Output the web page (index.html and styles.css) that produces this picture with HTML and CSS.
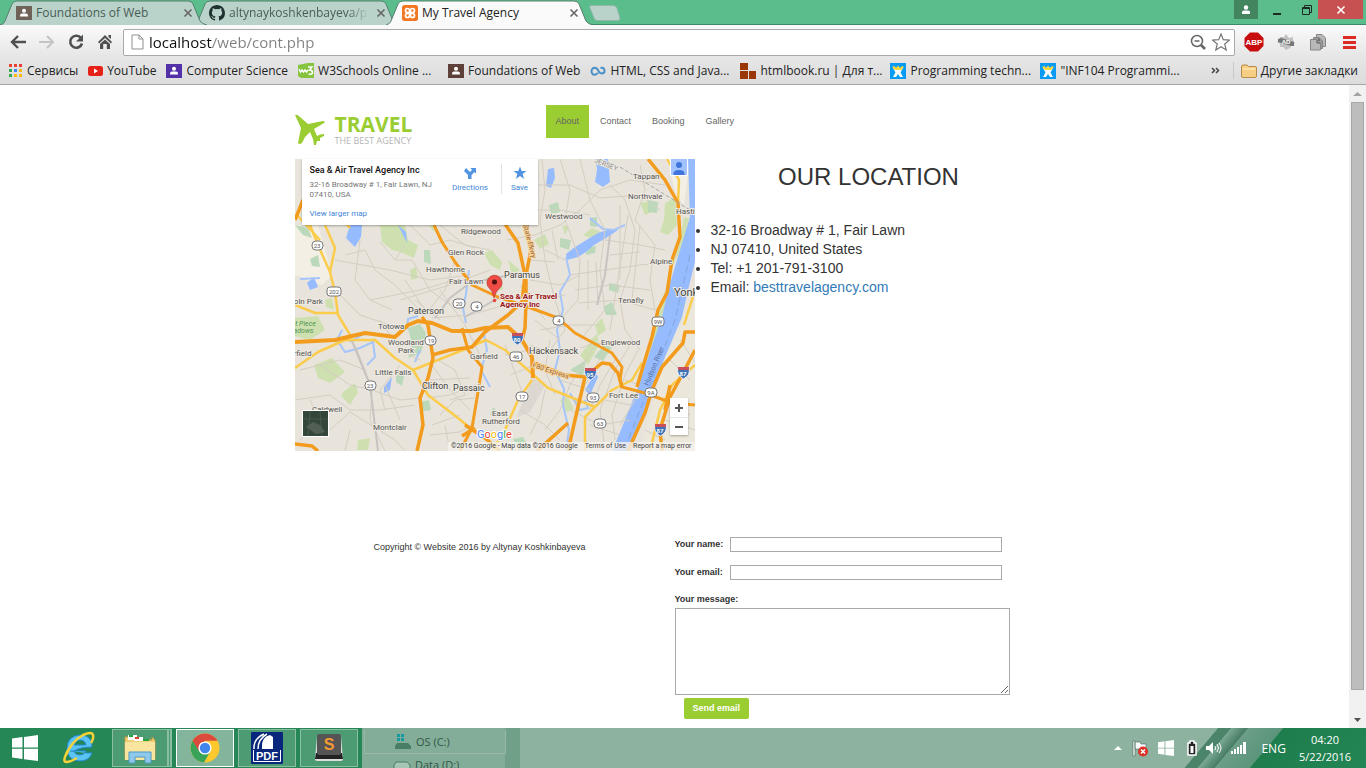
FILE: index.html
```html
<!DOCTYPE html>
<html lang="en">
<head>
<meta charset="utf-8">
<title>My Travel Agency</title>
<link rel="stylesheet" href="styles.css">
</head>
<body>
<svg class="defs" width="0" height="0" aria-hidden="true">
  <symbol id="tab-shape" viewBox="0 0 207 25" preserveAspectRatio="none"><path d="M0 25Q4 24 5 21L12 4Q13 1 17 1H188Q192 1 193 4L200 21Q202 24 207 25"/></symbol>
  <symbol id="person" viewBox="0 0 16 14"><rect width="16" height="14"/><circle cx="8" cy="4.700" r="2" fill="#fff"/><path d="M4 10.500V9.500Q4 7.500 6 7.500H10Q12 7.500 12 9.500V10.500Z" fill="#fff"/></symbol>
  <symbol id="close-x" viewBox="0 0 10 10"><path d="M1.500 1.500L8.500 8.500M8.500 1.500L1.500 8.500" stroke-width="1.600" fill="none"/></symbol>
  <symbol id="wix" viewBox="0 0 16 16"><rect width="16" height="16" fill="#0a9bf5"/><path d="M3 5L7 6H9L13 5L10.500 9.500L13 14H10L8 11L6 14H3L5.500 9.500Z" fill="#fff"/><path d="M2 4L4.500 3L6 5L8 2.500L10 5L12 3L14 4L11 7H5Z" fill="#fdd83a"/></symbol>
  <symbol id="win" viewBox="0 0 26 26"><path d="M0 3.600L10.500 2.100V12.400H0ZM12 1.900L26 0V12.400H12ZM0 13.800H10.500V24L0 22.500ZM12 13.800H26V26L12 24.200Z"/></symbol>
</svg>

<header class="browser">
  <div class="tabstrip">
    <div class="tab tab-first">
      <svg class="tab-bg"><use href="#tab-shape"/></svg>
      <svg class="favicon" fill="#6f6258"><use href="#person"/></svg>
      <span class="tab-title">Foundations of Web</span>
      <button class="tab-close" aria-label="Close tab"><svg width="10" height="10"><use href="#close-x"/></svg></button>
    </div>
    <div class="tab tab-second">
      <svg class="tab-bg"><use href="#tab-shape"/></svg>
      <svg class="favicon" viewBox="0 0 16 16"><path fill="#1f3230" d="M8 0C3.580 0 0 3.580 0 8c0 3.540 2.290 6.530 5.470 7.590.4.070.55-.17.55-.38v-1.490c-2.230.48-2.690-.94-2.690-.94-.36-.92-.89-1.170-.89-1.170-.73-.5.050-.49.050-.49.810.06 1.230.83 1.230.83.710 1.230 1.870.87 2.330.67.070-.52.280-.87.500-1.070-1.780-.2-3.640-.89-3.640-3.950 0-.87.310-1.590.82-2.150-.08-.2-.36-1.020.08-2.120 0 0 .67-.22 2.200.82a7.600 7.600 0 0 1 4 0c1.530-1.040 2.200-.82 2.200-.82.440 1.100.16 1.920.08 2.120.51.560.82 1.270.82 2.150 0 3.070-1.870 3.750-3.650 3.950.29.250.54.730.54 1.480v2.200c0 .21.150.46.550.38A8 8 0 0 0 16 8c0-4.420-3.580-8-8-8z"/></svg>
      <span class="tab-title">altynaykoshkenbayeva/project</span>
      <button class="tab-close" aria-label="Close tab"><svg width="10" height="10"><use href="#close-x"/></svg></button>
    </div>
    <div class="tab tab-active">
      <svg class="tab-bg"><use href="#tab-shape"/></svg>
      <svg class="favicon" viewBox="0 0 16 16"><rect width="16" height="16" rx="2.500" fill="#f37623"/><path d="M5.500 3.500a2 2 0 1 0 0 4H10.500a2 2 0 1 0-2-2V10.500a2 2 0 1 0 2-2H5.500a2 2 0 1 0 2 2V5.500a2 2 0 0 0-2-2" fill="none" stroke="#fff" stroke-width="1.700"/></svg>
      <span class="tab-title">My Travel Agency</span>
      <button class="tab-close" aria-label="Close tab"><svg width="10" height="10"><use href="#close-x"/></svg></button>
    </div>
    <button class="new-tab" aria-label="New tab"><svg width="32" height="16" viewBox="0 0 32 16"><path d="M2 .5H24Q27 .5 28 3L31 13Q31 15.500 29 15.500H8Q6 15.500 5 13L1 3Q0 .5 2 .5Z" fill="#b9d3cb" stroke="#8fb8a8"/></svg></button>
    <div class="window-controls">
      <button class="wc-user" aria-label="User"><svg width="10" height="10" viewBox="0 0 10 10" fill="#fff"><circle cx="5" cy="2.500" r="2.200"/><path d="M1 9V7Q1 5.500 3 5.500H7Q9 5.500 9 7V9Z"/></svg></button>
      <button class="wc-min" aria-label="Minimize"><svg width="10" height="10"><path d="M1 8H9V10H1Z" fill="#1f2a25"/></svg></button>
      <button class="wc-restore" aria-label="Restore"><svg width="11" height="11" fill="none" stroke="#1f2a25"><path d="M.5 3.500H7.500V10.500H.5Z M.5 4.500H8M2.500 3V1.500H9.500V8.500H8"/></svg></button>
      <button class="wc-close" aria-label="Close"><svg width="10" height="10" stroke="#fff"><use href="#close-x"/></svg></button>
    </div>
  </div>

  <div class="toolbar">
    <button class="tool" aria-label="Back"><svg width="16" height="14" viewBox="0 0 16 14" fill="none" stroke="#505050" stroke-width="2.400"><path d="M8 1L2 7L8 13M2 7H16"/></svg></button>
    <button class="tool" aria-label="Forward"><svg width="16" height="14" viewBox="0 0 16 14" fill="none" stroke="#c4c4c4" stroke-width="2"><path d="M8 1L14 7L8 13M14 7H0"/></svg></button>
    <button class="tool" aria-label="Reload"><svg width="16" height="16" viewBox="0 0 16 16"><path d="M12.500 3.500A6 6 0 1 0 14 9.500" fill="none" stroke="#505050" stroke-width="2.600"/><path d="M15 .5V7.500H8Z" fill="#505050"/></svg></button>
    <button class="tool" aria-label="Home"><svg width="16" height="16" viewBox="0 0 16 16" fill="#505050"><path d="M8 1L15 8L14 9.500L8 4L2 9.500L1 8ZM11.500 1H14V5L11.500 3ZM3 10L8 5.500L13 10V15H9.800V10H6.200V15H3Z"/></svg></button>
    <div class="omnibox">
      <svg width="13" height="16" viewBox="0 0 13 16" fill="#fff" stroke="#8f8f8f"><path d="M1 1H8L12 5V15H1Z M8 1V5H12"/></svg>
      <input class="url" type="text" aria-label="Address" value="localhost/web/cont.php">
      <svg width="17" height="17" viewBox="0 0 17 17" fill="none" stroke="#666" stroke-width="1.500"><circle cx="7" cy="7" r="5.500"/><path d="M4.500 7H9.500"/><path d="M11 11L15 15" stroke-width="2.500"/></svg>
      <svg width="18" height="18" viewBox="0 0 18 18" fill="#fff" stroke="#777" stroke-width="1.200"><path d="M9 1L11.300 6.700L17.400 7.100L12.700 11L14.200 17L9 13.700L3.800 17L5.300 11L.6 7.100L6.700 6.700Z"/></svg>
    </div>
    <button class="tool ext" aria-label="ABP"><svg width="20" height="20" viewBox="0 0 20 20"><path d="M6 .5H14L19.500 6V14L14 19.500H6L.5 14V6Z" fill="#c70d0d"/><text x="10" y="13" class="abp">ABP</text></svg></button>
    <button class="tool ext" aria-label="Extension"><svg width="18" height="18" viewBox="0 0 18 18"><path d="M9 1L12 5L16 4V7L18 10L15 12L13 15L9 17L6 14L3 14V11L0 9L3 6L3 4L7 4Z" fill="#c2c2c2"/><path d="M1 6L4 5L17 9L17 13L14 13L1 9Z" fill="#777"/><text x="9" y="11" class="ad">AD</text></svg></button>
    <button class="tool ext" aria-label="Documents"><svg width="18" height="18" viewBox="0 0 18 18" stroke="#858585"><path d="M7.500 1.500H13L16.500 5V13.500H7.500Z" fill="#b8b8b8"/><path d="M4.500 4.500H10L13.500 8V15.500H4.500Z" fill="#999"/><path d="M1.500 6.500H8L11.500 10V17H1.500Z" fill="#b8b8b8"/><path d="M8 7V10H11M10 5V8" fill="none" stroke="#555"/></svg></button>
    <button class="tool ext" aria-label="Menu"><svg width="14" height="14" viewBox="0 0 14 14" fill="#dc2b25"><path d="M0 1H13V4H0ZM0 6H13V9H0ZM0 11H13V14H0Z"/></svg></button>
  </div>

  <nav class="bookmarks" aria-label="Bookmarks">
    <a class="bm" href="#"><svg width="15" height="15" viewBox="0 0 15 15"><path d="M1 1H4V4H1ZM6 1H9V4H6ZM11 1H14V4H11Z" fill="#e84134"/><path d="M1 6H4V9H1ZM1 11H4V14H1Z" fill="#34a853"/><path d="M6 6H9V9H6Z" fill="#4285f4"/><path d="M11 6H14V9H11ZM6 11H9V14H6ZM11 11H14V14H11Z" fill="#f9bb0b"/></svg>Сервисы</a>
    <a class="bm" href="#"><svg width="15" height="12" viewBox="0 0 15 12"><rect y="1" width="15" height="10" rx="2.500" fill="#e62117"/><path d="M6 3.500L10 6L6 8.500Z" fill="#fff"/></svg>YouTube</a>
    <a class="bm" href="#"><svg width="16" height="14" fill="#5130a8"><use href="#person"/></svg>Computer Science</a>
    <a class="bm bm-long" href="#"><svg width="16" height="15" viewBox="0 0 16 15"><path d="M0 2L10 0H16V15H3L0 13Z" fill="#86c440"/><path d="M1 6L2.500 9L4 7L5.500 9L7 7L8.500 9L10 7M10 4H14L11.500 7Q14.500 7 14.500 9.500Q14 12 10.500 11" fill="none" stroke="#fff" stroke-width="1.500"/></svg>W3Schools Online ...</a>
    <a class="bm" href="#"><svg width="16" height="14" fill="#5d4037"><use href="#person"/></svg>Foundations of Web</a>
    <a class="bm bm-long" href="#"><svg width="16" height="12" viewBox="0 0 16 12" fill="none" stroke="#4a90c8" stroke-width="2"><path d="M8 8Q3 12 1.500 7Q1.500 2 6 3Q8 4 9 7Q12 10 14.500 7Q15 2 10.500 3"/></svg>HTML, CSS and Java...</a>
    <a class="bm bm-long" href="#"><svg width="16" height="16" fill="#9b3706"><path d="M0 0H8V7H0ZM0 8H8V16H0ZM9 8H16V16H9Z"/></svg>htmlbook.ru | Для т...</a>
    <a class="bm bm-long" href="#"><svg width="16" height="16"><use href="#wix"/></svg>Programming techn...</a>
    <a class="bm bm-long" href="#"><svg width="16" height="16"><use href="#wix"/></svg>"INF104 Programmi...</a>
    <button class="more" aria-label="More bookmarks"><svg width="9" height="7" fill="none" stroke="#444" stroke-width="1.500"><path d="M1 1L3.500 3.500L1 6M5 1L7.500 3.500L5 6"/></svg></button>
    <a class="bm bm-folder" href="#"><svg width="16" height="14" viewBox="0 0 16 14"><path d="M.5 3Q.5 1 2 1H6L7.500 2.500H14Q15.500 2.500 15.500 4V12Q15.500 13.500 14 13.500H2Q.5 13.500 .5 12Z" fill="#f6cf85" stroke="#b98a48"/><path d="M1.500 5H14.500" stroke="#fff0c8"/></svg>Другие закладки</a>
  </nav>
</header>

<div class="viewport">
  <main class="site">
    <div class="site-head">
      <a class="logo" href="#">
        <svg width="31" height="32" viewBox="0 0 31 32" fill="#9acd32"><path d="M0 1Q2 0 5 3L13 10L28 7Q31 7 29 9L19 15L22 22Q25 20 29 20L29 22L25 24L25 27L22 27L21 31L19 31L18 25L15 18L10 23L7 29Q4 31 3 29L6 14Z"/></svg>
        <span class="logo-text"><b>TRAVEL</b><small>THE BEST AGENCY</small></span>
      </a>
      <nav class="menu" aria-label="Site">
        <a class="current" href="#">About</a><a href="#">Contact</a><a href="#">Booking</a><a href="#">Gallery</a>
      </nav>
    </div>

    <div class="content">
      <div class="map">
        <svg class="map-art" viewBox="295 159 400 292" role="img" aria-label="Map of Fair Lawn">
          <rect x="295" y="159" width="400" height="292" fill="#e8e4db"/>
          <path fill="#f3efe5" d="M295 225H318L332 275L322 285L295 275ZM667 159H690L684 205L676 195Z"/>
          <path fill="#dcd8d1" d="M533 378L545 385L530 412L516 418Z"/>
          <path fill="#ece7db" d="M665 357L695 300V451H640Z"/>
          <g fill="#cfe0b0">
            <path d="M380 225H405L408 240L418 245L414 258L400 252L392 250L382 242ZM295 318L318 316L325 330L310 340L295 336ZM314 365L332 358L345 372L330 383L318 378ZM343 392L355 383L358 392L350 405L341 396ZM410 270L416 267L418 278L411 280ZM428 224L435 223L434 232ZM484 253L492 250L502 262L500 270L490 265ZM508 260L520 270L512 275ZM534 240L545 234L549 244L540 249ZM583 235L592 228L601 232L590 238ZM562 225L569 227L565 235ZM665 203L675 198L677 225L668 235L660 232L664 220ZM640 203L650 201L652 212L645 215ZM485 278L500 276L503 290L490 290ZM580 355L592 340L600 343L588 365ZM595 325L602 318L606 330L598 336ZM560 400L568 397L574 409L566 412ZM358 440L370 438L368 450L357 450ZM590 340L597 334L599 342ZM325 300L332 298L334 310L326 307Z"/>
            <path d="M668 275L683 245L689 218L684 217L679 245L668 280ZM665 290L656 325L645 370L650 357L667 310Z"/>
          </g>
          <g fill="#bbd9ba">
            <path d="M295 225L308 228L312 238L303 235ZM310 259L318 255L320 267L312 266ZM408 328L420 324L426 333L421 353L408 358L412 344ZM396 374L404 376L402 386L396 382ZM420 402L429 400L431 410L420 412ZM424 250L430 250L431 264L424 262ZM549 205L558 202L560 212L551 214ZM560 238L571 240L569 250L560 247ZM587 248L596 246L595 253L586 255ZM590 218L597 217L597 227L590 226ZM609 283L620 285L618 293L609 290ZM594 357L604 345L612 347L603 361ZM648 200L658 202L657 213L648 212ZM596 160L602 159L603 167L597 167ZM603 307L612 302L617 315L606 315ZM513 439L523 437L530 449L519 451ZM570 370L586 360L583 376ZM490 415L493 407L500 414Z"/>
          </g>
          <g fill="#96bbff">
            <path d="M688 159H695V262L688 290L682 317L665 357L648 400L635 437L632 451H612L618 437L637 390L648 357L662 317L668 290L677 260L690 217Z"/>
            <path d="M350 225L362 225L361 237L355 247L346 238ZM398 225L406 232L407 243L402 233ZM596 159L608 159L610 182L603 187L595 182L597 170ZM548 169L554 168L555 178L551 188L546 186ZM566 254L575 247L588 239L598 233L610 229L618 230L606 238L594 245L586 252L578 257L567 260ZM384 387L392 377L390 390L384 393ZM307 283L314 277L318 287L310 290ZM585 390L591 380L594 370L598 377L590 395Z"/>
          </g>
          <g fill="none" stroke="#a6c5fa" stroke-width="2">
            <path d="M566 257L570 275L560 292L563 310L557 330L560 350L555 370L564 389L563 405L569 430L566 451"/>
            <path d="M590 218L603 229L614 230L625 225M469 270L466 294L463 308L466 323"/>
            <path d="M342 330L337 340L345 352L360 348L373 342L375 357L367 365M365 333L350 342M418 316L408 319L407 329M484 335L487 350L481 370L490 387M420 350L415 362M300 279L320 278M585 400L588 408L580 410L570 393"/>
          </g>
          <g fill="none" stroke="#d4cdc2">
            <path d="M345 255L365 250L375 270L395 285L410 300L425 315M380 242L395 260L412 260L430 290L450 305M360 240L355 280L370 300L392 310M340 295L360 315L390 325M335 260L390 270L430 280L470 275M370 300L395 295L420 290L455 280M440 225L465 245L490 250M410 225L430 245L450 240L475 248M395 260L405 245M400 300L450 285L490 270M425 315L445 290L455 260M432 318L470 315L505 305M440 290L465 325L480 355M415 300L440 320M405 280L425 310M380 320L400 350L420 360M355 345L365 370L372 390L370 420L385 451M372 390L400 400L420 398M320 365L350 385L372 390M300 370L340 360L365 370M295 400L330 395L350 410L380 410L415 405M330 430L350 412L395 440L405 451M300 440L320 420L310 400M345 451L350 430M385 410L380 390L400 365M400 420L385 385M432 365L450 390L470 410M438 360L455 370L465 395L450 400M430 380L470 378M428 398L450 395L475 385M440 415L455 400L475 398M432 425L460 415M430 435L460 432L475 423M445 425L450 451"/>
            <path d="M507 240L535 235L560 225L580 210L600 190L630 180L665 185M542 159L545 190L540 220L545 260L555 300L565 330L550 350M560 159L570 190L565 220L580 260L578 300L560 320M580 159L590 200L605 230L600 270L605 310L580 340M610 185L625 200L635 230L630 270L620 300L625 330L640 350M640 165L645 190L635 220L655 245L650 280L655 310M538 185L570 185L600 198L640 195L660 210M530 210L560 210L590 215M545 250L565 260M570 275L605 270L640 265L670 262M575 290L610 285L650 290M578 303L620 300L655 310M605 240L640 245L665 250M610 255L640 252M530 260L555 262M530 280L560 285L580 275M540 300L565 295M535 320L560 340M530 345L560 355L590 345L620 340M540 330L570 325L600 325M505 355L530 350M510 375L535 365M550 340L545 370L555 395M595 345L570 385L560 410L545 430M605 350L585 385L575 405M615 360L600 385L590 410M630 345L615 370L600 410L605 451M638 350L625 375L612 415L615 440M570 410L600 425L630 420M590 425L620 435M520 410L545 425L560 440M545 390L540 415L530 435M655 395L690 415M670 360L690 380M665 420L695 430M645 430L665 440M680 340L695 362M560 380L590 390M635 400L620 425"/>
            <path d="M620 205V280M628 215L610 330M588 260V310M596 262L598 305M640 225L632 300M552 230L558 260M520 285L545 320M505 345L525 400M625 380L640 385M605 400L630 405"/>
          </g>
          <path fill="none" stroke="#c7c3c0" stroke-width="2" d="M435 318L450 298L470 283L505 276M465 317L500 297M610 235L605 275L597 305M352 341L370 385L378 451"/>
          <g fill="none" stroke="#fbcb4b" stroke-width="2.500" stroke-linejoin="round">
            <path d="M310 225L318 245L330 272L335 292L338 315L352 338M325 225L335 248L330 272M295 305L315 313L338 313M295 368L318 352L345 340L375 340L395 358L413 370L438 360L468 348L486 340L505 350L528 370L548 388L595 407L612 390L632 380L642 363"/>
            <path d="M413 370L428 395L458 418L475 432M532 380L518 400L505 430L492 451M595 407L585 417L585 451M667 159L679 180L678 203M695 365L672 385L660 410L650 451M297 215L320 240M338 215L350 228M695 290L684 325"/>
          </g>
          <g fill="none" stroke="#f39b1c" stroke-linejoin="round">
            <path stroke-width="4" d="M295 342L335 340L365 333L395 337L408 325L418 321L432 323L452 331L472 331L485 328L508 327L522 340L532 357L533 378"/>
            <path stroke-width="3.500" d="M417 451L423 425L420 398L428 378L433 358L428 325L422 317M432 355L450 350L472 347L485 332L508 315L522 302L525 275L518 243L505 224"/>
            <path stroke-width="3" d="M462 328L468 350L482 367L478 392L472 428L460 451M434 225L442 242L455 262L472 285L498 297L528 307L558 318L575 333L612 353L622 367L620 380L622 387L645 393L672 403L695 405"/>
            <path stroke-width="3.500" d="M525 222L531 250L526 275L526 303L525 328L522 340M537 451L568 423M568 451L575 420L585 377L565 375L535 363M585 377L602 363L610 364L618 373L622 387"/>
            <path stroke-width="3.500" d="M648 159L665 180L678 203L680 237L672 260L667 293L658 310L652 337L642 370L637 387M695 332L685 332L683 343L662 367L652 390L645 413L628 451M695 350L683 373L670 397L660 430L662 451M295 220L303 200M295 444L312 446L318 451M465 425L485 438L500 451M670 385L665 410M475 428L462 436"/>
          </g>
          <path d="M690 255L675 320L650 385L628 440" fill="none" stroke="#83a4dc" stroke-dasharray="7 4"/>
          <path d="M620 167L690 210" fill="none" stroke="#aaa" stroke-dasharray="4 2"/>
          <g class="town">
            <text x="633" y="179">Tappan</text><text x="628" y="199">Northvale</text><text x="676" y="214">Hastings</text><text x="545" y="219">Westwood</text><text x="461" y="234">Ridgewood</text><text x="448" y="255">Glen Rock</text><text x="426" y="272">Hawthorne</text><text x="449" y="284">Fair Lawn</text><text x="650" y="264">Alpine</text><text x="618" y="303">Tenafly</text><text x="601" y="345">Englewood</text><text x="378" y="329">Totowa</text><text x="388" y="345">Woodland</text><text x="398" y="353">Park</text><text x="470" y="359">Garfield</text><text x="375" y="375">Little Falls</text><text x="312" y="412">Caldwell</text><text x="373" y="430">Montclair</text><text x="492" y="416">East</text><text x="482" y="424">Rutherford</text><text x="279" y="304">Lincoln Park</text><text x="283" y="356">Fairfield</text><text x="609" y="398">Fort Lee</text>
          </g>
          <g class="city"><text x="504" y="278">Paramus</text><text x="408" y="314">Paterson</text><text x="529" y="354">Hackensack</text><text x="422" y="389">Clifton</text><text x="453" y="391">Passaic</text><text x="674" y="296" class="large">Yonkers</text></g>
          <g class="park"><text x="281" y="326">Great Piece</text><text x="284" y="333">Meadows</text></g>
          <g class="road"><text transform="translate(523 225) rotate(75)">State Pkwy</text><text transform="translate(532 367) rotate(18)">I-80 Express</text></g>
          <text class="river" transform="translate(648 386) rotate(-67)">Hudson River</text>
          <text class="jersey" transform="translate(594 162) rotate(22)">JERSEY</text>
          <g class="shield">
            <rect x="312" y="241" width="11" height="9" rx="4"/><text x="317" y="248">23</text><rect x="327" y="287" width="14" height="9" rx="3"/><text x="334" y="294">202</text><rect x="453" y="299" width="12" height="9" rx="4"/><text x="459" y="306">20</text><rect x="471" y="302" width="11" height="9" rx="4"/><text x="477" y="309">4</text><rect x="425" y="336" width="11" height="9" rx="4"/><text x="431" y="343">19</text><rect x="365" y="381" width="11" height="9" rx="4"/><text x="370" y="388">23</text><rect x="553" y="316" width="11" height="9" rx="4"/><text x="559" y="323">4</text><rect x="510" y="352" width="12" height="9" rx="3"/><text x="516" y="359">46</text><rect x="516" y="392" width="12" height="9" rx="4"/><text x="522" y="399">17</text><rect x="587" y="393" width="12" height="9" rx="4"/><text x="593" y="400">93</text><rect x="594" y="419" width="12" height="9" rx="4"/><text x="600" y="426">63</text><rect x="652" y="317" width="12" height="9" rx="3"/><text x="658" y="324">9W</text><rect x="645" y="388" width="12" height="9" rx="4"/><text x="651" y="395">9A</text>
          </g>
          <g class="interstate">
            <path d="M512 334H523Q525 341 517.500 345Q510 341 512 334ZM585 369H596Q598 376 590.500 380Q583 376 585 369ZM678 368H689Q691 375 683.500 379Q676 375 678 368ZM655 425H666Q668 432 660.500 436Q653 432 655 425Z"/>
            <path class="crown" d="M512 333H523V336H512ZM585 368H596V371H585ZM678 367H689V370H678ZM655 424H666V427H655Z"/>
            <text x="517" y="342">80</text><text x="590" y="377">95</text><text x="683" y="376">87</text><text x="660" y="433">87</text>
          </g>
          <path d="M494 298Q493 291 488 286.500A7.500 7.500 0 1 1 501 286.500Q495 292 494 298Z" fill="#ee4c45" stroke="#b93631" stroke-width=".7"/>
          <circle cx="494.500" cy="282" r="2.500" fill="#4d1210"/><circle cx="494.500" cy="300.500" r="1.800" fill="#e8453c"/>
          <g class="place"><text x="500" y="299">Sea &amp; Air Travel</text><text x="500" y="307">Agency Inc</text></g>
          <text class="google" x="477" y="438"><tspan fill="#4285f4">G</tspan><tspan fill="#ea4335">o</tspan><tspan fill="#fbbc05">o</tspan><tspan fill="#4285f4">g</tspan><tspan fill="#34a853">l</tspan><tspan fill="#ea4335">e</tspan></text>
          <rect x="302.500" y="410.500" width="26" height="26" fill="#34463a" stroke="#fff"/>
          <path d="M303 419H328M310 411L308 436M320 411L322 436" stroke="#46594d" fill="none"/><path d="M306 427L313 422L320 425L325 432L316 434Z" fill="#525f55"/>
          <rect x="670.500" y="158.500" width="17" height="17" fill="#a0c3ff" stroke="#fff"/><circle cx="679" cy="165" r="3" fill="#3f74dc"/><path d="M673.500 175V173Q674 170 679 170Q684 170 684.500 173V175Z" fill="#3f74dc"/>
        </svg>
        <div class="card">
          <div class="card-place"><strong>Sea &amp; Air Travel Agency Inc</strong><p>32-16 Broadway # 1, Fair Lawn, NJ 07410, USA</p><a href="#">View larger map</a></div>
          <a class="card-action" href="#"><svg width="14" height="14" viewBox="0 0 14 14" fill="#5294e2"><path d="M5 13V9L1 5L3 2L7 6L9 4L7.500 2H13V7.500L11.500 6L8.500 9V13Z"/></svg>Directions</a>
          <a class="card-action save" href="#"><svg width="14" height="14" viewBox="0 0 14 14" fill="#5294e2"><path d="M7 .5L8.700 5H13.500L9.700 8L11 13L7 10L3 13L4.300 8L.5 5H5.300Z"/></svg>Save</a>
        </div>
        <div class="zoom"><button aria-label="Zoom in"><svg width="8" height="8"><path d="M3 0H5V3H8V5H5V8H3V5H0V3H3Z" fill="#555"/></svg></button><button aria-label="Zoom out"><svg width="8" height="8"><path d="M0 3H8V5H0Z" fill="#555"/></svg></button></div>
        <div class="credits"><span>©2016 Google - Map data ©2016 Google</span><a href="#">Terms of Use</a><a href="#">Report a map error</a></div>
      </div>

      <section class="location">
        <h1>OUR LOCATION</h1>
        <ul>
          <li>32-16 Broadway # 1, Fair Lawn</li>
          <li>NJ 07410, United States</li>
          <li>Tel: +1 201-791-3100</li>
          <li>Email: <a href="#">besttravelagency.com</a></li>
        </ul>
      </section>
    </div>

    <footer class="site-foot">
      <p class="copyright">Copyright © Website 2016 by Altynay Koshkinbayeva</p>
      <form class="mail">
        <div class="row"><label for="name">Your name:</label><input id="name" type="text"></div>
        <div class="row"><label for="email">Your email:</label><input id="email" type="email"></div>
        <label class="message-label" for="message">Your message:</label>
        <textarea id="message"></textarea>
        <button class="send" type="button">Send email</button>
      </form>
    </footer>
  </main>
  <div class="scrollbar" aria-hidden="true">
    <svg width="17" height="17"><path d="M4 11L8.500 7L13 11Z" fill="#a3a3a3"/></svg>
    <div class="thumb"></div>
    <svg width="17" height="17"><path d="M5 7H12L8.500 11Z" fill="#505050"/></svg>
  </div>
</div>

<div class="taskbar">
  <button class="start" aria-label="Start"><svg width="26" height="26" fill="#fff"><use href="#win"/></svg></button>
  <button class="task" aria-label="Internet Explorer"><svg width="34" height="34" viewBox="0 0 34 34"><path d="M8 20H24Q22 24 18 24Q13 24 12 20Q18 16 30 16Q30 4 18 4Q5 5 5 18Q6 30 18 30Q27 30 30 22H24M12 14Q14 9 18 9Q23 9 24 14Z" fill="#5bc4f4" fill-rule="evenodd" stroke="#238bd0"/><path d="M6 19Q0 31 4 31Q8 31 15 27M4 24Q9 11 21 4Q30 0 31 4Q32 7 29 12" fill="none" stroke="#f7d238" stroke-width="2.500"/></svg></button>
  <button class="task open stack" aria-label="Explorer"><svg width="34" height="32" viewBox="0 0 34 32"><path d="M2 5H13L15 8H29V5L32 8V27H2Z" fill="#edcf77" stroke="#c49a43"/><path d="M5 3H14V8H5ZM11 5H20V9H11Z" fill="#fff"/><path d="M6 3H10V5H6ZM20 7H26V9H20Z" fill="#22a445"/><path d="M12 5H16V7H12Z" fill="#e13e29"/><path d="M2 10H32V28H2Z" fill="#f8e5a0"/><path d="M6 31V20H28V31H22V25H12V31Z" fill="#8fc8e9" stroke="#4b9ac6"/></svg></button>
  <button class="task open active" aria-label="Chrome"><svg width="30" height="30" viewBox="0 0 30 30"><circle cx="15" cy="15" r="14.500" fill="#fbc82e"/><path d="M2.500 7.700A14.500 14.500 0 0 1 27.600 7.700H15L9 19Z" fill="#da4a3d"/><path d="M2.500 7.700A14.500 14.500 0 0 0 14 29.500L20.500 18L9 18Z" fill="#39a35a"/><circle cx="15" cy="15" r="6.600" fill="#fff"/><circle cx="15" cy="15" r="5.200" fill="#4285ed"/></svg></button>
  <button class="task open" aria-label="PDF"><svg width="32" height="32" viewBox="0 0 32 32"><rect width="32" height="32" rx="1" fill="#08277c"/><path d="M3 17V14Q4 6 13 2M7 17Q7 7 16 2" fill="none" stroke="#fff" stroke-width="1.500"/><path d="M11 16Q10 5 19 3L22 5V17H11Z" fill="#fff"/><path d="M2.500 18V29.500H29.500V18" fill="none" stroke="#fff"/><text x="16" y="28" class="pdf">PDF</text></svg></button>
  <button class="task open" aria-label="Sublime Text"><svg width="30" height="30" viewBox="0 0 30 30"><path d="M3 3L1 26Q1 28 3 28H27Q29 28 29 26L27 3Z" fill="#ddd"/><path d="M2 20L1 26H29L28 20Z" fill="#222"/><rect x="3" y="1" width="24" height="21" rx="2" fill="#555"/><text x="15" y="17" class="sublime">S</text></svg></button>
  <div class="glass">
    <div class="drives">
      <div class="drive drive-top"><svg width="18" height="16" viewBox="0 0 18 16"><path d="M3 0H6V3H3ZM7 0H10V3H7ZM3 4H6V7H3ZM7 4H10V7H7Z" fill="#139a9e"/><path d="M3 9H14L17 12V15H1V12Z" fill="#497d65"/></svg>OS (C:)</div>
      <div class="drive"><svg width="18" height="16" viewBox="0 0 18 16"><path d="M3 5H14L17 8V15H1V8Z" fill="#a6c6b5" stroke="#497d65"/></svg>Data (D:)</div>
    </div>
  </div>
  <div class="tray">
    <svg width="10" height="6" viewBox="0 0 10 6"><path d="M1 5L5 1L9 5Z" fill="#fff"/></svg>
    <svg width="17" height="17" viewBox="0 0 17 17"><path d="M1 1H3V16H1ZM3 2H8L9 4H14V11H8L7 9H3Z" fill="#fff" stroke="#465" stroke-width=".6"/><circle cx="11" cy="11.500" r="5" fill="#dc3229"/><path d="M9 9.500L13 13.500M13 9.500L9 13.500" stroke="#fff" stroke-width="1.500"/></svg>
    <svg width="16" height="16" viewBox="0 0 26 26" fill="#fff"><use href="#win"/></svg>
    <svg class="battery" width="10" height="16" viewBox="0 0 10 16"><path d="M3 1H7V3H9V15H1V3H3Z" fill="#222" stroke="#fff" stroke-width="1.500"/><path d="M3.500 6H6.500V13H3.500Z" fill="#fff"/></svg>
    <svg width="16" height="14" viewBox="0 0 16 14"><path d="M0 5H3L7 1V13L3 9H0Z" fill="#fff"/><path d="M9 5Q10 7 9 9M11 3Q14 7 11 11M13 2Q17 7 13 12" fill="none" stroke="#fff"/></svg>
    <svg width="16" height="12" fill="#fff"><path d="M0 9H2V12H0ZM3 7H5V12H3ZM6 5H8V12H6ZM9 3H11V12H9ZM12 0H15V12H12Z"/></svg>
    <span class="lang">ENG</span>
    <span class="clock">04:20<br>5/22/2016</span>
  </div>
</div>
</body>
</html>
```
FILE: styles.css
```css
* { box-sizing: border-box; }
body {
  margin: 0;
  height: 100vh;
  display: flex;
  flex-direction: column;
  overflow: hidden;
  background: #fff;
  color: #333;
  font-family: "Liberation Sans", Arial, sans-serif;
}
button { border: 0; padding: 0; background: none; font: inherit; color: inherit; }
a { text-decoration: none; color: inherit; }
svg { flex: none; display: block; }
.defs { position: absolute; }

/* Browser frame */
.browser { flex: none; font-family: "Open Sans", "Noto Sans", sans-serif; font-size: 12px; color: #222; }
.tabstrip { height: 25px; display: flex; background: #5cbd8c; border-bottom: 1px solid #3f8766; }
.tab { position: relative; flex: 0 1 207px; min-width: 0; height: 25px; padding: 0 11px 0 16px; display: flex; align-items: center; gap: 4px; color: #4a5c56; }
.tab + .tab { margin-left: -14px; }
.tab-first { z-index: 2; }
.tab-second { z-index: 1; }
.tab-active { z-index: 3; color: #222; }
.tab-bg { position: absolute; left: 0; top: 0; width: 100%; height: 100%; fill: #b9d3cb; stroke: #55806f; }
.tab-active .tab-bg { fill: #fafafa; }
.favicon { position: relative; width: 16px; height: 16px; }
.tab-title { position: relative; flex: 1; min-width: 0; overflow: hidden; white-space: nowrap; }
.tab-second .tab-title { -webkit-mask-image: linear-gradient(to right, #000 85%, transparent); mask-image: linear-gradient(to right, #000 85%, transparent); }
.tab-close { position: relative; width: 16px; height: 16px; display: grid; place-items: center; stroke: #666; }
.new-tab { margin: 5px 0 0 -4px; align-self: flex-start; }
.window-controls { margin-left: auto; display: flex; padding-right: 3px; height: 19px; }
.window-controls button { display: grid; place-items: center; }
.wc-user { width: 24px; background: #43855f; }
.wc-min { width: 38px; }
.wc-restore { width: 22px; }
.window-controls .wc-close { width: 45px; background: #c75050; }

.toolbar { height: 32px; display: flex; align-items: center; padding: 2px 0 0 3px; background: linear-gradient(#fafafa, #e6e6e6); }
.tool { width: 29px; height: 26px; display: grid; place-items: center; }
.ext { width: 32px; }
.omnibox { flex: 1; margin: 0 3px 0 4px; height: 27px; padding: 0 4px 0 7px; display: flex; align-items: center; gap: 5px; background: #fff; border: 1px solid #a9a9a9; border-radius: 2px; }
.url { flex: 1; min-width: 0; border: 0; padding: 0; outline: 0; font: 15px "Open Sans", "Noto Sans", sans-serif; color: transparent; background: linear-gradient(to right, #111 63px, #808080 63px); -webkit-background-clip: text; background-clip: text; }
.abp, .ad, .pdf, .sublime { font-family: "Liberation Sans", Arial, sans-serif; font-weight: bold; text-anchor: middle; fill: #fff; }
.abp { font-size: 8px; }
.ad { font-size: 6px; }

.bookmarks { height: 28px; display: flex; align-items: center; gap: 10px; padding: 0 8px; background: linear-gradient(#e6e6e6, #dcdcdc); border-bottom: 1px solid #a6a6a6; white-space: nowrap; }
.bm { display: flex; align-items: center; gap: 4px; }
.bm-long { width: 140px; }
.more { margin-left: auto; width: 12px; }
.bm-folder { border-left: 1px solid #c8c8c8; padding-left: 7px; }

/* Page viewport */
.viewport { flex: 1; min-height: 0; display: flex; overflow: hidden; }
.site { flex: 1; padding: 0 calc((100% - 777px) / 2); }
.scrollbar { width: 17px; background: #f1f1f1; display: flex; flex-direction: column; }
.thumb { flex: 1; margin: 0 2px 21px; background: #bdbdbd; border: 1px solid #a8a8a8; }

.site-head { display: flex; height: 74px; padding-top: 20px; }
.logo { flex: 0 0 251px; display: flex; gap: 9px; padding-top: 9px; }
.logo-text { display: flex; flex-direction: column; font-family: "Open Sans", sans-serif; color: #9acd32; }
.logo-text b { font-size: 21px; line-height: 21px; }
.logo-text small { font-size: 9px; line-height: 12px; color: #b5b5b5; }
.menu { display: flex; gap: 1px; height: 33px; font-size: 9px; line-height: 13px; color: #666; }
.menu a { padding: 10px; }
.menu .current { background: #9acd32; }

.content { display: flex; }
.map { position: relative; flex: 0 0 400px; font-family: Roboto, sans-serif; }
.map-art { width: 100%; height: auto; }
.map-art text { font-family: Roboto, sans-serif; }
.town text, .city text { fill: #555; stroke: #eeeae2; stroke-width: 2px; paint-order: stroke; }
.town text { font-size: 8px; }
.city text { font-size: 9px; fill: #444; }
.city .large { font-size: 11px; }
.park text { font-size: 7px; font-style: italic; fill: #4e9450; }
.road text { font-size: 7px; fill: #9a5b1c; stroke: #f7d9a8; stroke-width: 2px; paint-order: stroke; }
.map-art .river { font-size: 7px; fill: #55709c; }
.map-art .jersey { font-size: 7px; fill: #8b8b8b; stroke: #eeeae2; stroke-width: 2px; paint-order: stroke; }
.shield rect { fill: #fff; stroke: #777; }
.shield text, .interstate text { font-size: 6px; text-anchor: middle; fill: #555; }
.interstate path { fill: #3e74b5; stroke: #eef; stroke-width: 1px; }
.interstate .crown { fill: #c8505a; stroke: none; }
.interstate text { fill: #fff; font-weight: bold; }
.place text { font-size: 8px; font-weight: bold; fill: #9b1520; stroke: #eeeae2; stroke-width: 2px; paint-order: stroke; }
.map-art .google { font-size: 11px; stroke: #fff; stroke-width: 2px; paint-order: stroke; }
.card { position: absolute; left: 7px; top: 0; width: 236px; height: 66px; display: flex; padding: 5px 2px 0 8px; background: #fff; box-shadow: 0 1px 2px rgba(0, 0, 0, .3); font-size: 8px; line-height: 10px; color: #777; }
.card-place { flex: 1; }
.card strong { display: block; font-size: 9px; line-height: 12px; font-weight: 500; color: #111; white-space: nowrap; }
.card p { margin: 4px 0 9px; width: 130px; }
.card a { color: #4285d8; }
.card-action { flex: 0 0 61px; height: 30px; display: flex; flex-direction: column; align-items: center; gap: 3px; padding-top: 2px; }
.card .save { flex-basis: 37px; border-left: 1px solid #e2e2e2; }
.zoom { position: absolute; right: 7px; bottom: 16px; width: 18px; background: #fff; box-shadow: 0 1px 2px rgba(0, 0, 0, .3); }
.zoom button { width: 18px; height: 19px; display: grid; place-items: center; }
.zoom button + button { height: 18px; border-top: 1px solid #e4e4e4; }
.credits { position: absolute; right: 0; bottom: 0; display: flex; gap: 7px; padding: 0 3px; background: rgba(245, 243, 238, .8); font-size: 7px; line-height: 9px; color: #444; white-space: nowrap; }

.location { flex: 1; padding-right: 12px; }
.location h1 { margin: 4px 0 0; font-size: 24px; line-height: 28px; font-weight: 400; text-align: center; }
.location ul { margin: 30px 0 0; padding-left: 16px; font-size: 14px; line-height: 19px; }
.location li a { color: #337ab7; }

.site-foot { display: flex; margin-top: 86px; font-size: 9px; }
.copyright { flex: 0 0 370px; margin: 4px 0 0; text-align: center; line-height: 13px; }
.mail { flex: 0 0 345px; padding-left: 10px; line-height: 13px; }
.mail label { font-weight: bold; }
.row { display: flex; align-items: center; justify-content: space-between; height: 15px; margin-bottom: 13px; padding-right: 8px; }
.row input { width: 272px; height: 15px; border: 1px solid #a9a9a9; padding: 1px; font: inherit; }
.mail .message-label { display: block; margin: 0 0 2px; }
.mail textarea { display: block; width: 100%; height: 87px; border: 1px solid #a9a9a9; }
.send { margin: 3px 0 0 9px; height: 21px; padding: 0 9px; background: #9acd32; border-radius: 2px; color: #fff; font-weight: bold; }

/* Taskbar */
.taskbar { flex: none; height: 40px; display: flex; align-items: stretch; overflow: hidden; background: #258656; font-family: "Open Sans", "Noto Sans", sans-serif; font-size: 11px; }
.taskbar button { display: grid; place-items: center; }
.start { width: 50px; }
.task { width: 58px; margin: 1px 4px 1px 0; }
.open { border: 1px solid #8bbda3; background: #4d9b73; }
.stack { width: 60px; border-right: 5px double #8bbda3; }
.active { border-color: #fff; background: #82b59b; }
.glass { flex: 1; background: linear-gradient(to right, #83ad98 143px, #71a088 143px, #71a088 158px, #8db29f 158px); color: #315747; }
.drives { width: 144px; padding-left: 2px; }
.drive { display: flex; align-items: center; gap: 4px; height: 21px; padding-left: 29px; white-space: nowrap; }
.drive-top { height: 24px; margin-top: 2px; border: 1px solid #99b9a8; border-top: 0; }
.tray { display: flex; align-items: center; gap: 9px; padding: 0 15px 0 0; background: linear-gradient(130deg, #8db29f 80px, #4c8469 81px, #4c8469 90px, #79a893 91px, #487d65 103px, #6d9e88 104px, #5a957a 130px, #1f7d4d 131px, #238654); color: #fff; }
.battery { margin-left: 4px; }
.lang { margin-left: 5px; font-size: 12px; }
.clock { margin-left: 4px; line-height: 17px; text-align: center; }
.pdf { font-size: 11px; }
.sublime { font-size: 16px; fill: #f59a33; }
```
